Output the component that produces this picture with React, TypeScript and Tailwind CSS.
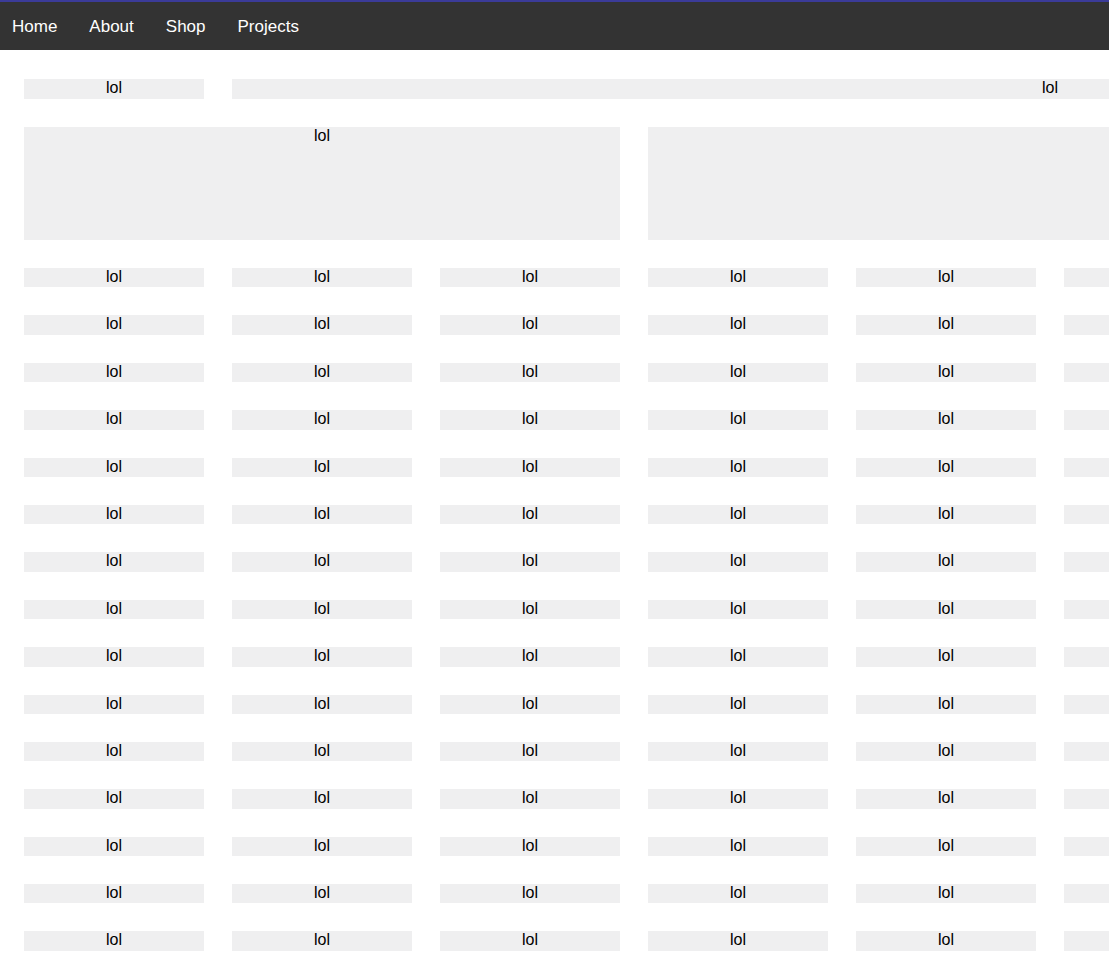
const links = ["Home", "About", "Shop", "Projects"];

function Cell({ span, h }: { span?: string; h?: string }) {
  return (
    <div
      className={`bg-[#efeff0] text-center text-[16px] leading-[18px] text-black ${span ?? ""} ${h ?? "h-[19.4px]"}`}
    >
      lol
    </div>
  );
}

export default function App() {
  const rows = Array.from({ length: 16 });
  return (
    <div className="h-screen w-full overflow-hidden bg-white font-['Liberation_Sans',Arial,sans-serif]">
      <nav className="flex h-[50px] items-center gap-8 border-t-2 border-[#3b3b99] bg-[#333333] pl-3 text-[17px] text-white">
        {links.map((l) => (
          <a key={l} href="#" className="leading-none">
            {l}
          </a>
        ))}
      </nav>
      <div className="grid w-max grid-cols-[repeat(9,180px)] gap-x-[28px] gap-y-[28px] pl-6 pt-[29px]">
        <Cell h="h-[20.4px]" />
        <Cell span="col-span-8" h="h-[20.4px]" />
        <Cell span="col-span-3" h="h-[112.6px]" />
        <Cell span="col-span-6" h="h-[112.6px]" />
        {rows.map((_, r) =>
          Array.from({ length: 9 }).map((_, c) => <Cell key={`${r}-${c}`} />)
        )}
      </div>
    </div>
  );
}
